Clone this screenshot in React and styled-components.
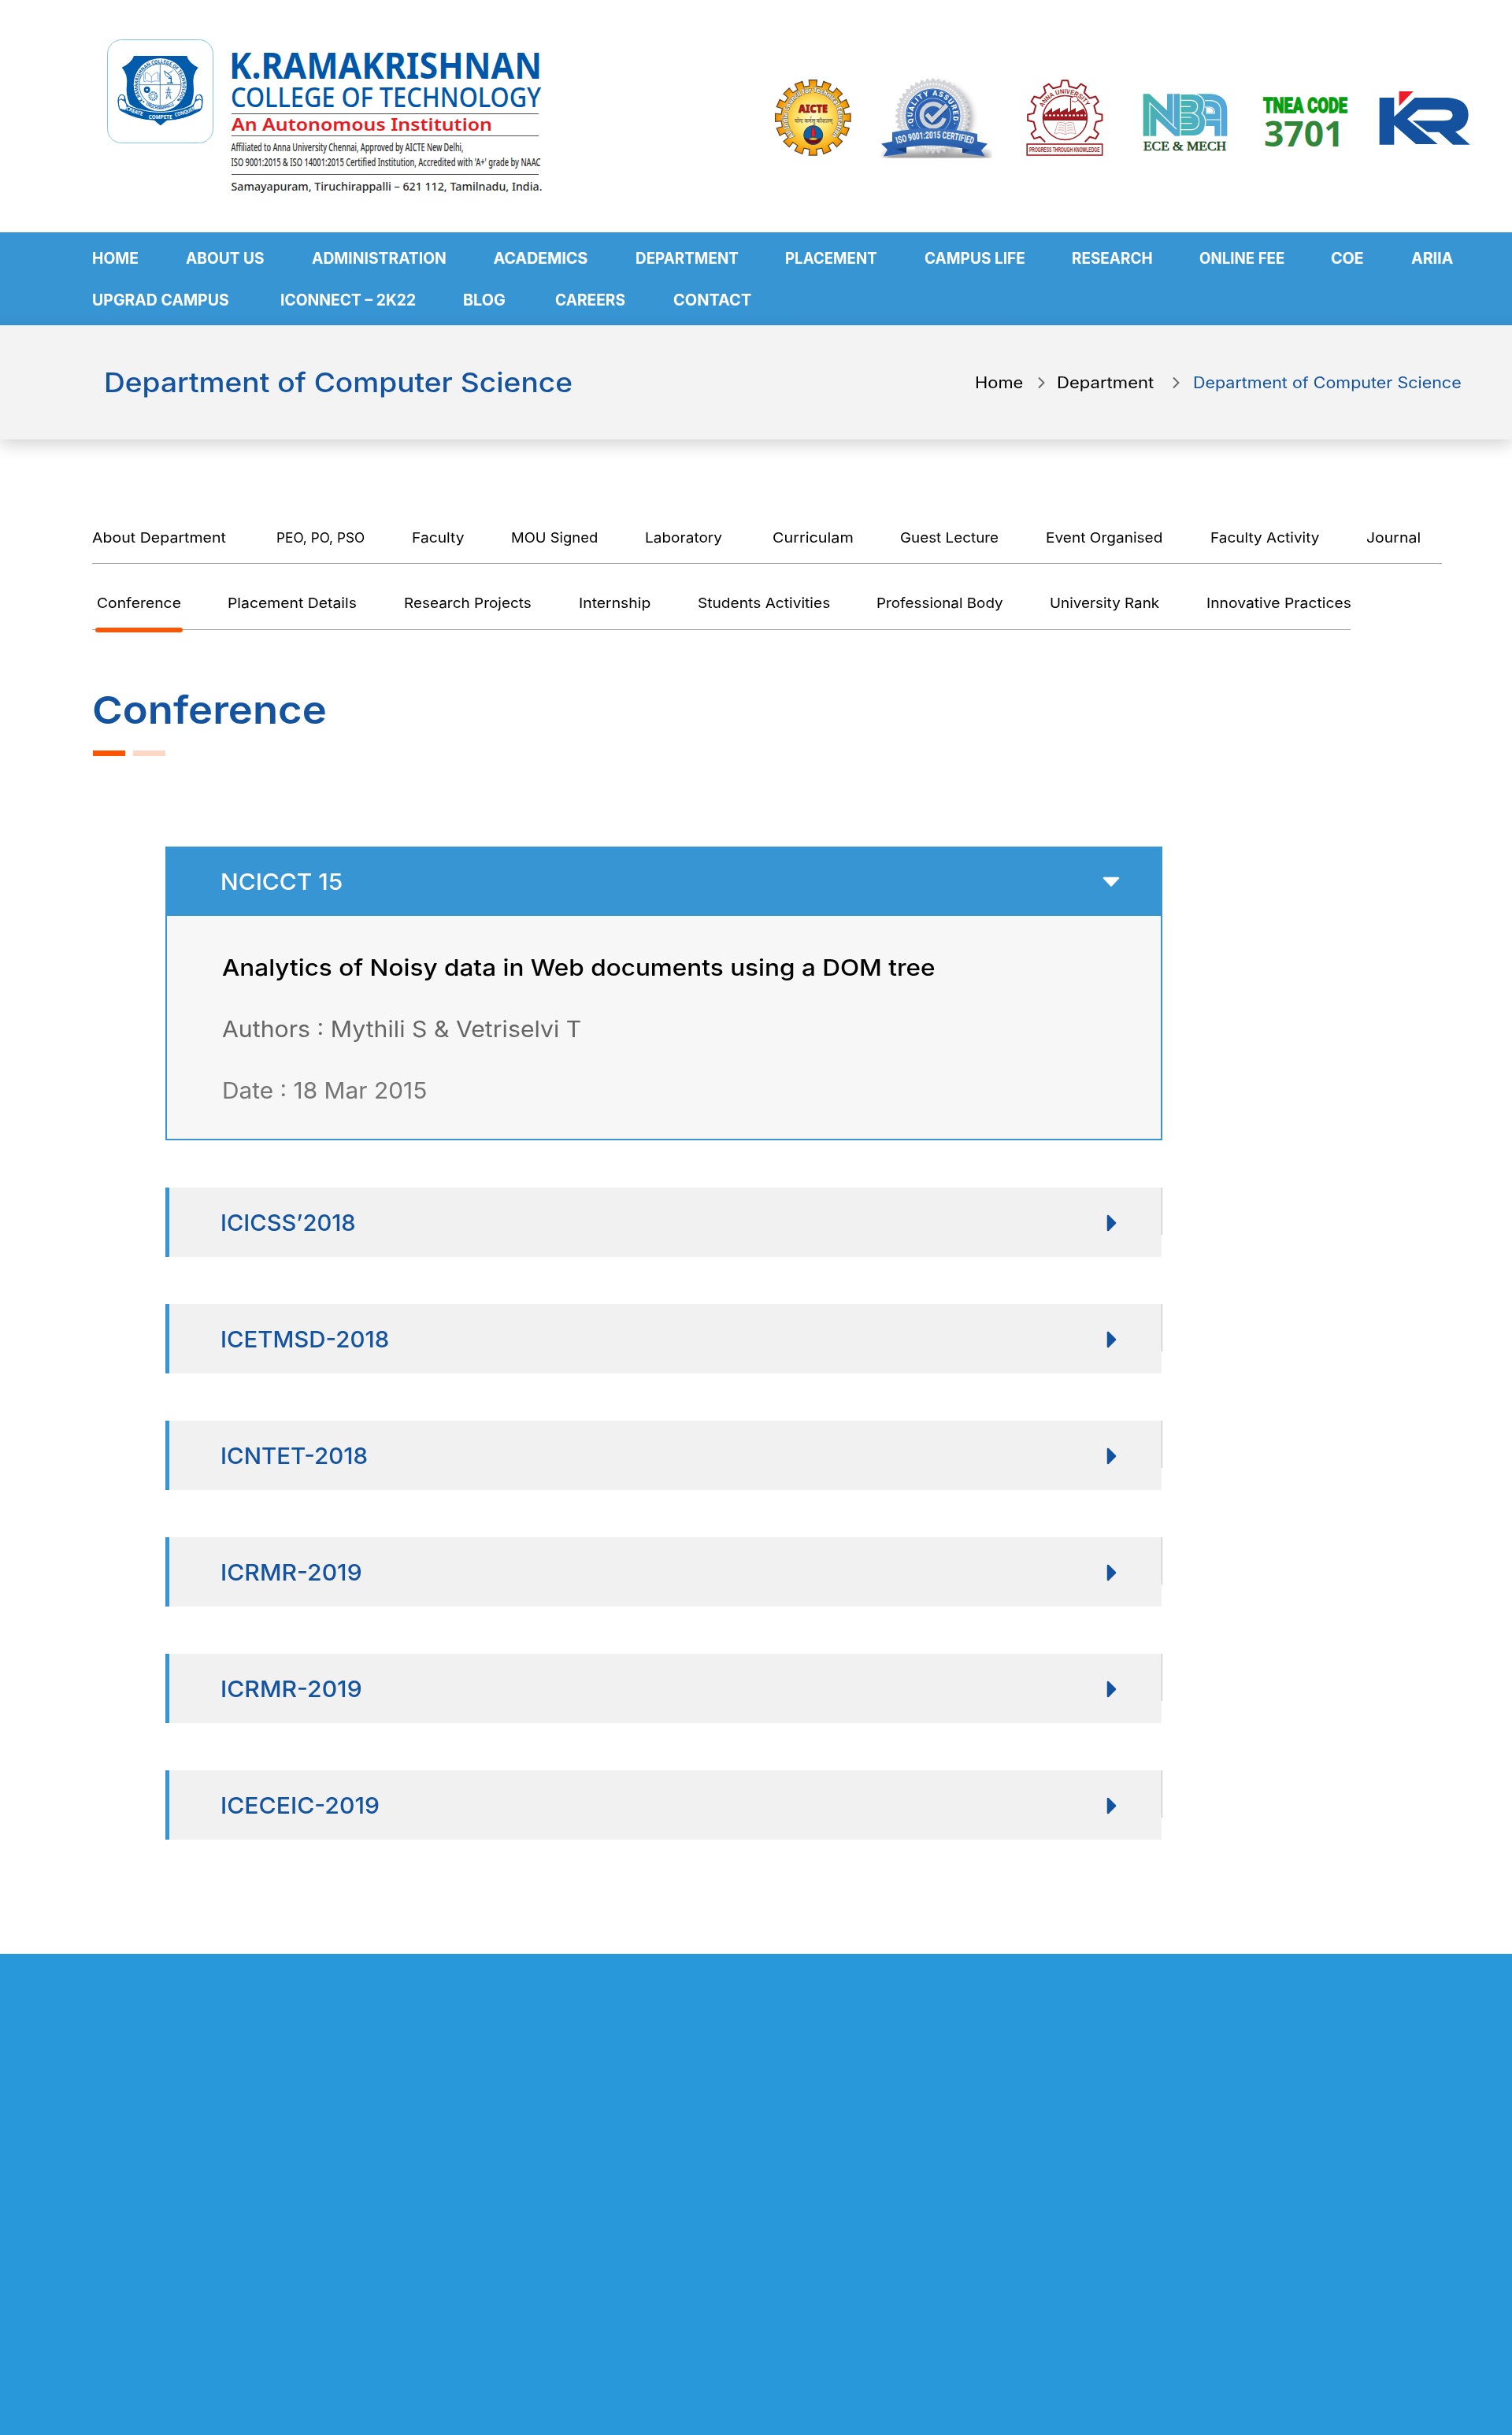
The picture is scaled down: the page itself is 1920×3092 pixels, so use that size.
import React, { useLayoutEffect, useRef, useState } from "react";
import styled, { createGlobalStyle, css } from "styled-components";

const BLUE = "#3895d3";
const NAVY = "#1353a0";
const ORANGE = "#ff5500";

const GlobalStyle = createGlobalStyle`
  *, *::before, *::after { box-sizing: border-box; }
  body { margin: 0; background: #fff; font-family: Inter, "Open Sans", sans-serif; }
`;

/* ---------- text that is widened to a set measure ---------- */

const Measure = styled.span`
  display: block;
  flex: none;
  white-space: nowrap;
  width: ${(p) => p.$width}px;
`;

const Glyphs = styled.span`
  display: inline-block;
  transform-origin: left center;
`;

function FitText({ width, children }) {
  const ref = useRef(null);
  const [scale, setScale] = useState(1);
  useLayoutEffect(() => {
    setScale((width + 1) / ref.current.offsetWidth);
  }, [width, children]);
  return (
    <Measure $width={width}>
      <Glyphs ref={ref} style={{ transform: `scaleX(${scale})` }}>{children}</Glyphs>
    </Measure>
  );
}

/* ---------- header ---------- */

const Header = styled.header`
  display: flex;
  align-items: flex-start;
  justify-content: space-between;
  height: 295px;
  padding: 40px 40px 0 130px;
`;

const Badges = styled.div`
  display: flex;
  padding-top: 50px;
`;

const Art = styled.svg`
  display: block;
  flex: none;
  overflow: visible;
`;

const sans = '"Noto Sans", "Open Sans", sans-serif';

function Fit({ x, y, w, size, children, ...rest }) {
  return (
    <text x={x} y={y} fontSize={size} textLength={w} lengthAdjust="spacingAndGlyphs" {...rest}>
      {children}
    </text>
  );
}

function CollegeLogo() {
  return (
    <Art width="570" height="220" viewBox="130 40 570 220" fontFamily={sans}>
      <defs>
        <path id="crestTop" d="M155.500 246.500 A85 85 0 1 1 284.500 246.500" />
        <path id="crestBottom" d="M163 263 A96 96 0 0 0 277 263" />
        <path id="mottoLeft" d="M89 282 Q120 299 165 309" />
        <path id="mottoMid" d="M176 319 H270" />
        <path id="mottoRight" d="M277 309 Q320 301 358 281" />
      </defs>
      <rect x="136.500" y="50.500" width="134" height="131" rx="18" fill="#fff" stroke="#84c5e3" />
      <g transform="translate(130 45) scale(0.33333)">
        <path d="M120 78 H322 Q328 104 365 122 Q342 148 347 190 Q352 225 338 262 L222 340 L104 262 Q88 225 93 190 Q98 148 74 122 Q112 104 120 78Z" fill="#005baa" />
        <path d="M57 250 C57 225 76 214 87 232 C94 250 88 262 105 269 Q222 316 335 269 C354 260 348 250 356 232 C368 214 387 225 384 250 C384 275 378 286 370 290 Q310 324 246 325 Q232 336 222 345 Q210 336 198 325 Q130 323 72 290 C62 285 58 270 57 250Z" fill="#005baa" stroke="#fff" strokeWidth="3" />
        <path d="M61 248 C61 226 78 220 84 234 C88 248 74 250 72 242 M72 242 Q92 250 94 274 L88 286 L66 280 Q60 264 61 248Z M380 248 C380 226 363 220 357 234 C353 248 367 250 369 242 M369 242 Q349 250 346 272 L354 284 L375 280 Q381 264 380 248Z" fill="#fff" stroke="#005baa" strokeWidth="3" />
        <circle cx="220" cy="188" r="101" fill="#fff" />
        <circle cx="220" cy="188" r="80" fill="#fff" stroke="#005baa" strokeWidth="2.500" />
        <path d="M220 108 V268 M140 188 H300" stroke="#005baa" strokeWidth="2.200" />
        <g fontSize="19" fontWeight="700" fill="#005baa">
          <text>
            <textPath href="#crestTop" textLength="384" lengthAdjust="spacingAndGlyphs">K.RAMAKRISHNAN COLLEGE OF TECHNOLOGY</textPath>
          </text>
          <text fontSize="16">
            <textPath href="#crestBottom" textLength="118" lengthAdjust="spacingAndGlyphs">TIRUCHIRAPPALLI</textPath>
          </text>
        </g>
        <circle cx="157" cy="253" r="3.500" fill="#005baa" />
        <circle cx="289" cy="246" r="3.500" fill="#005baa" />
        <path d="M158 145 V176 Q176 170 187 179 Q198 170 217 175 V143 M187 178 V156 Q170 138 163 142 V168 M187 156 Q205 138 212 141 V168" fill="none" stroke="#6f9fcd" strokeWidth="2.600" />
        <path d="M237 136 Q240 166 264 158Z M250 146 L268 134 M234 134 L258 152" fill="none" stroke="#005baa" strokeWidth="2.400" />
        <path d="M252 164 L262 162 V180 M246 181 H270" fill="none" stroke="#005baa" strokeWidth="4" />
        <path d="M252 196 L243 243 M252 196 L261 243 M243 207 H261 M240 217 H264 M248 222 L260 240 M256 222 L244 240" fill="none" stroke="#2a6fb3" strokeWidth="2.200" />
        <circle cx="170" cy="207" r="8" fill="none" stroke="#005baa" strokeWidth="8" />
        <circle cx="193" cy="231" r="15" fill="none" stroke="#3478b8" strokeWidth="6" strokeDasharray="5 2.800" />
        <circle cx="193" cy="231" r="8" fill="none" stroke="#3478b8" strokeWidth="2.500" />
        <g fontSize="20" fontWeight="700" fill="#fff">
          <text><textPath href="#mottoLeft" textLength="68" lengthAdjust="spacingAndGlyphs">CREATE</textPath></text>
          <text><textPath href="#mottoMid" textLength="90" lengthAdjust="spacingAndGlyphs">COMPETE</textPath></text>
          <text><textPath href="#mottoRight" textLength="82" lengthAdjust="spacingAndGlyphs">CONQUER</textPath></text>
        </g>
      </g>

      <Fit x={291} y={99.6} w={397} size={47.4} fontWeight="700" fill="#0057a8">K.RAMAKRISHNAN</Fit>
      <Fit x={293} y={135.6} w={394} size={33.8} fontWeight="500" fill="#0057a8">COLLEGE OF TECHNOLOGY</Fit>
      <path d="M294 144.500 H684 M294 172.500 H684 M294 221.500 H684" stroke="#4d4d4d" strokeWidth="1" />
      <Fit x={294} y={166.4} w={331} size={21.4} fontWeight="600" fill="#e31b23">An Autonomous Institution</Fit>
      <g fill="#2b2b2b">
        <Fit x={293.5} y={191.6} w={295} size={13.8} fontWeight="500">Affiliated to Anna University Chennai, Approved by AICTE New Delhi,</Fit>
        <Fit x={293.5} y={211} w={393} size={13.8} fontWeight="500">ISO 9001:2015 &amp; ISO 14001:2015 Certified Institution, Accredited with 'A+' grade by NAAC</Fit>
        <Fit x={293.5} y={242.4} w={395} size={15} fontWeight="500">Samayapuram, Tiruchirappalli – 621 112, Tamilnadu, India.</Fit>
      </g>
    </Art>
  );
}

function gearPath(cx, cy, teeth, inner, outer, rootHalf, tipHalf) {
  const step = (Math.PI * 2) / teeth;
  const at = (r, a) => `${(cx + r * Math.sin(a)).toFixed(2)} ${(cy - r * Math.cos(a)).toFixed(2)}`;
  const points = [];
  for (let i = 0; i < teeth; i += 1) {
    const a = i * step;
    points.push(at(inner, a - rootHalf * step), at(outer, a - tipHalf * step), at(outer, a + tipHalf * step), at(inner, a + rootHalf * step));
  }
  return `M${points.join("L")}Z`;
}

function AicteBadge() {
  return (
    <Art width="120" height="120" viewBox="980 90 120 120" fontFamily={sans}>
      <defs>
        <radialGradient id="gold">
          <stop offset="0" stopColor="#fffbd0" />
          <stop offset="0.45" stopColor="#ffe36a" />
          <stop offset="0.8" stopColor="#fbb41c" />
          <stop offset="1" stopColor="#ee8a00" />
        </radialGradient>
        <path id="aicteRing" d="M1009 172.500 A32.500 32.500 0 1 1 1055.600 172.500" />
      </defs>
      <path d={gearPath(1032.3, 149.3, 16, 40.5, 48, 0.27, 0.27)} fill="url(#gold)" stroke="#57442e" strokeWidth="1.200" />
      <text fontSize="8.800" fontWeight="700" fill="#fff" stroke="#6b6659" strokeWidth="1.300" paintOrder="stroke">
        <textPath href="#aicteRing" textLength="151" lengthAdjust="spacingAndGlyphs">All India Council for Technical Education</textPath>
      </text>
      <Fit x={1014} y={142.5} w={37} size={14.2} fontWeight="900" fill="#c8141b" stroke="#4a1210" strokeWidth="0.600">AICTE</Fit>
      <Fit x={1009} y={155.5} w={48} size={8} fontWeight="700" fill="#7d7355">योगः कर्मसु कौशलम्</Fit>
      <circle cx="1032.700" cy="171.600" r="12" fill="#0d63a8" stroke="#2a2f45" strokeWidth="0.900" />
      <path d="M1022 175 Q1032.700 179 1043.400 175 Q1041 182.500 1032.700 182.800 Q1024.500 182.500 1022 175Z" fill="#6c0f1f" />
      <path d="M1027 176.500 Q1032.700 173 1038.500 176.500 Q1032.700 179.500 1027 176.500Z" fill="#e8b723" />
      <path d="M1032.700 160.500 Q1036.500 168 1035 173 Q1032.700 175 1030.500 173 Q1029 168 1032.700 160.500Z" fill="#ee1c25" stroke="#7c0e14" strokeWidth="0.500" />
    </Art>
  );
}

function IsoBadge() {
  return (
    <Art width="180" height="120" viewBox="1100 90 180 120" fontFamily='Roboto, "Noto Sans", sans-serif'>
      <defs>
        <path id="sealRing" d="M1161.800 159.500 A26 26 0 1 1 1207.600 159.500" />
        <path id="sealRibbon" d="M1139 182.800 Q1187 168 1237 183.500" />
        <linearGradient id="ribbonFill" x1="0" x2="0" y1="0" y2="1">
          <stop offset="0" stopColor="#3d74bd" />
          <stop offset="1" stopColor="#2558a5" />
        </linearGradient>
        <filter id="soft" x="-30%" y="-30%" width="160%" height="160%">
          <feGaussianBlur stdDeviation="4" />
        </filter>
        <clipPath id="sealClip"><rect x="1110" y="96" width="150" height="104.500" /></clipPath>
      </defs>
      <g clipPath="url(#sealClip)">
        <circle cx="1191" cy="150" r="43" fill="#000" opacity="0.4" filter="url(#soft)" />
        <path d="M1124 193 H1256 V206 H1124Z" fill="#000" opacity="0.42" filter="url(#soft)" />
      </g>
      <path d={gearPath(1184.7, 147.2, 40, 44, 48, 0.5, 0.08)} fill="#d2d4d7" />
      <circle cx="1184.700" cy="147.200" r="40.500" fill="none" stroke="#f5f6f7" strokeWidth="2.500" strokeDasharray="2 1.800" />
      <circle cx="1184.700" cy="147.200" r="35.500" fill="#2c62b2" stroke="#e9ebee" strokeWidth="1.500" />
      <circle cx="1184.700" cy="147.200" r="33.500" fill="none" stroke="#6f98d2" strokeWidth="0.800" />
      <circle cx="1184.700" cy="147.200" r="22.500" fill="#2c62b2" stroke="#9fbbe2" strokeWidth="1" />
      <path d="M1195.500 136.500 A14.500 14.500 0 1 0 1199 150" fill="none" stroke="#cfd2d6" strokeWidth="5.500" />
      <path d="M1176.500 145.500 L1183.500 153.500 L1203 133.500" fill="none" stroke="#214d93" strokeWidth="7.500" />
      <path d="M1176.500 145 L1183.500 152.500 L1202.500 133.500" fill="none" stroke="#cfd2d6" strokeWidth="5.500" />
      <text fontSize="9" fontWeight="800" fill="#fff">
        <textPath href="#sealRing" textLength="104" lengthAdjust="spacing">·QUALITY  ASSURED·</textPath>
      </text>
      <path d="M1119 182.500 L1136 179 L1151 190 V194.500 L1122 198.500 L1127 190Z M1254 182.500 L1238 179 L1222 190 V194 L1250.500 198.500 L1246 191Z" fill="#2a5eae" />
      <path d="M1151 187 V194 L1133 188Z M1222 187 V194 L1241 188Z" fill="#173e7d" />
      <path d="M1133 168 Q1187 157 1241 170 V193 Q1187 177.500 1133 190.500Z" fill="url(#ribbonFill)" />
      <text fontSize="12.400" fontWeight="800" fill="#f4f5f7">
        <textPath href="#sealRibbon" textLength="98" lengthAdjust="spacingAndGlyphs">ISO 9001:2015 CERTIFIED</textPath>
      </text>
    </Art>
  );
}

function AnnaBadge() {
  const red = "#9d1b20";
  return (
    <Art width="150" height="120" viewBox="1280 90 150 120" fontFamily='"Liberation Sans", sans-serif'>
      <defs>
        <path id="annaArc" d="M1324.300 136.500 A31 31 0 0 1 1380.300 136.500" />
      </defs>
      <path d={gearPath(1352.3, 149.3, 12, 40, 47.3, 0.26, 0.15)} fill="#fff" stroke={red} strokeWidth="2" strokeLinejoin="round" />
      <path d="M1325 183 L1334 172 H1371 L1380 183 V200 H1325Z" fill="#fff" />
      <circle cx="1352.500" cy="149.500" r="28" fill="#fff" stroke={red} strokeWidth="1.500" />
      <text fontSize="8.300" fontWeight="700" fill={red} stroke="#fff" strokeWidth="1.500" paintOrder="stroke">
        <textPath href="#annaArc" textLength="68" lengthAdjust="spacingAndGlyphs">ANNA UNIVERSITY</textPath>
      </text>
      <path d="M1325 153 V146 L1336 137 V142.500 L1346 137 V142.500 L1356 137 V142.500 L1366 137 V142.500 L1376 138 L1380 146 V153Z" fill={red} />
      <path d="M1327 146.500 H1379" stroke="#fff" strokeWidth="2.200" strokeDasharray="3 2" />
      <path d="M1359.500 142 V124" stroke={red} strokeWidth="1.200" />
      <path d="M1360 124 Q1368 120 1369 127 Q1366 131 1361 128" fill="#fff" stroke={red} strokeWidth="0.900" />
      <g fill="none" stroke="#cf8f91" strokeWidth="0.800">
        <path d="M1343 156 Q1349 154 1353 157 Q1357 154 1363 156 L1366 170 Q1358 167 1353 171 Q1347 167 1339 170Z M1353 157 V171" />
        <path d="M1344.500 159 Q1349 158 1351.500 160 M1344 162 Q1348 161 1351.500 163 M1343 165 Q1348 164 1351.500 166 M1355 160 Q1358 158 1361.500 159 M1355 163 Q1358 161 1362.500 162 M1355 166 Q1358 164 1363 165" />
      </g>
      <rect x="1304.200" y="183" width="95.500" height="14" fill="#fff" stroke={red} strokeWidth="1.600" />
      <Fit x={1307} y={193.3} w={89.5} size={9.4} fontWeight="700" fill={red}>PROGRESS THROUGH KNOWLEDGE</Fit>
    </Art>
  );
}

function NbaBadge() {
  return (
    <Art width="155" height="120" viewBox="1430 90 155 120">
      <defs>
        <linearGradient id="nba" gradientUnits="userSpaceOnUse" x1="95" y1="0" x2="415" y2="0">
          <stop offset="0" stopColor="#45b5a6" />
          <stop offset="0.4" stopColor="#53a6d8" />
          <stop offset="0.44" stopColor="#45b5ae" />
          <stop offset="0.75" stopColor="#4fadd0" />
          <stop offset="1" stopColor="#56a5de" />
        </linearGradient>
      </defs>
      <g transform="translate(1420 80) scale(0.33333)">
        <path d="M300 118 H352 Q415 122 415 180 V278 H367 V240 H330Z" fill="url(#nba)" />
        <path d="M330 143 H352 Q390 146 390 182 V278 M330 168 H350 Q367 170 367 192 H335 M335 216 H390" fill="none" stroke="#fff" strokeWidth="3.500" />
        <path d="M335 170 H348 Q362 172 362 190 H335Z" fill="#fff" />
        <path d="M237 118 H285 Q330 122 327 162 Q326 182 318 192 Q334 204 332 232 Q330 274 290 278 H237Z" fill="url(#nba)" stroke="#fff" strokeWidth="4" />
        <path d="M237 142 H278 Q302 144 302 165 Q302 190 278 190 M237 166 H276 M237 190 H280 Q308 196 308 224 Q306 252 282 254 H237 M237 207 H278 M237 230 H282" fill="none" stroke="#fff" strokeWidth="3.500" />
        <path d="M95 118 H119 L186 181 V118 H235 V278 H216 L145 212 V278 H95Z" fill="url(#nba)" />
        <path d="M120 280 V152 L222 252 M210 118 V240" fill="none" stroke="#fff" strokeWidth="3.500" />
      </g>
      <Fit x={1452} y={190.7} w={105} size={16} fontFamily='"Liberation Serif", serif' fill="#17481a" stroke="#17481a" strokeWidth="0.500">ECE &amp; MECH</Fit>
    </Art>
  );
}

function TneaBadge() {
  return (
    <Art width="150" height="120" viewBox="1585 90 150 120">
      <Fit x={1604} y={142.8} w={107} size={26.6} fontFamily="Roboto, sans-serif" fontWeight="900" fill="#089c10" stroke="#089c10" strokeWidth="1.300">TNEA CODE</Fit>
      <Fit x={1605} y={185.6} w={101.5} size={44} fontFamily='"Open Sans", sans-serif' fontWeight="700" fill="#32863a">3701</Fit>
    </Art>
  );
}

function KrBadge() {
  return (
    <Art width="145" height="120" viewBox="1735 90 145 120">
      <g transform="translate(1420 80) scale(0.33333)">
        <path d="M995 132 H1051 V205 L1130 132 H1255 Q1334 136 1334 198 Q1332 248 1284 262 L1340 311 H1275 L1222 263 H1178 L1121 220 H1240 Q1273 220 1274 199 Q1273 178 1242 178 H1143 L1101 214 L1217 309 H1134 L1051 236 V311 H995Z" fill="#14529f" />
        <path d="M1070 108 H1124 L1070 164Z" fill="#ee1c2b" />
      </g>
    </Art>
  );
}

/* ---------- main navigation ---------- */

const Nav = styled.nav`
  height: 118px;
  padding: 6px 0 0 117px;
  background: linear-gradient(${BLUE} 88%, #348ecb);
`;

const NavRow = styled.div`
  display: flex;
  align-items: center;
  height: 53px;
`;

const NavLink = styled.a`
  margin-left: ${(p) => p.$gap}px;
  color: #fff;
  font-size: 19.6px;
  font-weight: 700;
  line-height: 30px;
`;

// [label, space before, measure]
const NAV_ROWS = [
  [
    ["HOME", 0, 58], ["ABOUT US", 61, 98.5], ["ADMINISTRATION", 61, 169.5], ["ACADEMICS", 61.5, 119],
    ["DEPARTMENT", 61, 130], ["PLACEMENT", 60.5, 115.5], ["CAMPUS LIFE", 61, 126.5], ["RESEARCH", 61, 101.5],
    ["ONLINE FEE", 60.5, 107], ["COE", 60, 41], ["ARIIA", 61, 52],
  ],
  [["UPGRAD CAMPUS", 0, 173], ["ICONNECT – 2K22", 65.5, 171.5], ["BLOG", 60.5, 52.5], ["CAREERS", 65, 88], ["CONTACT", 61.5, 98]],
];

/* ---------- page banner ---------- */

const Banner = styled.section`
  display: flex;
  align-items: center;
  justify-content: space-between;
  height: 145px;
  padding: 0 65px 0 132px;
  background: #f3f3f3;
  box-shadow: 0 6px 20px rgba(0, 0, 0, 0.18);
  clip-path: inset(0 0 -40px 0);
`;

const BannerTitle = styled.h1`
  margin: 0;
  color: ${NAVY};
  font-size: 34px;
  font-weight: 500;
  line-height: 44px;
`;

const Crumbs = styled.div`
  display: flex;
  align-items: center;
  padding-top: 1px;
  font-size: 19.4px;
  font-weight: 420;
  line-height: 30px;
`;

const Crumb = styled.span`
  color: ${(p) => (p.$current ? NAVY : "#000")};
`;

const CrumbArrow = styled.svg`
  margin: 0 ${(p) => p.$after}px 0 ${(p) => p.$before}px;
`;

function Arrow({ before, after }) {
  return (
    <CrumbArrow $before={before} $after={after} width="9" height="16" viewBox="0 0 9 16">
      <path d="M1 1.500 L7.500 8 L1 14.500" fill="none" stroke="#666" strokeWidth="1.800" />
    </CrumbArrow>
  );
}

/* ---------- department tabs ---------- */

const Main = styled.main`
  padding: 92px 0 145px 117px;
`;

const TabRow = styled.div`
  display: flex;
  align-items: center;
  width: ${(p) => p.$width}px;
  height: ${(p) => p.$height}px;
  margin-bottom: 16px;
  padding-left: ${(p) => p.$indent}px;
  border-bottom: 1px solid #a6a6a6;
`;

const Tab = styled.a`
  position: relative;
  margin-left: ${(p) => p.$gap}px;
  color: #000;
  font-size: 17.8px;
  font-weight: 420;
  line-height: 28px;
  ${(p) =>
    p.$active &&
    css`
      &::after {
        content: "";
        position: absolute;
        left: -2px;
        right: -3px;
        bottom: -23px;
        height: 5.5px;
        border-radius: 3px;
        background: ${ORANGE};
      }
    `}
`;

const TABS_TOP = [
  ["About Department", 0, 168.5], ["PEO, PO, PSO", 65.5, 111.5], ["Faculty", 60.5, 65], ["MOU Signed", 60.5, 109],
  ["Laboratory", 61, 97.5], ["Curriculam", 65, 101.5], ["Guest Lecture", 60.5, 124], ["Event Organised", 60.5, 147],
  ["Faculty Activity", 62.5, 137], ["Journal", 60.5, 68],
];

const TABS_BOTTOM = [
  ["Conference", 0, 105.5], ["Placement Details", 60, 163.5], ["Research Projects", 60.5, 161], ["Internship", 61, 90.5],
  ["Students Activities", 60.5, 167], ["Professional Body", 60, 160], ["University Rank", 60.5, 138], ["Innovative Practices", 60.5, 182.5],
];

/* ---------- section heading ---------- */

const Heading = styled.h2`
  margin: 72px 0 0;
  color: ${NAVY};
  font-size: 48.5px;
  font-weight: 600;
  line-height: 60px;
`;

const Dashes = styled.div`
  display: flex;
  gap: 10px;
  margin: 21px 0 115.5px 1px;
`;

const Dash = styled.i`
  width: 41px;
  height: 6.5px;
  background: ${(p) => (p.$pale ? "#ffd5c4" : ORANGE)};
`;

/* ---------- accordion ---------- */

const Accordion = styled.div`
  display: flex;
  flex-direction: column;
  gap: 60px;
  width: 1266px;
  margin-left: 93px;
`;

const Bar = styled.div`
  display: flex;
  align-items: center;
  justify-content: space-between;
  height: 88px;
  padding-top: 1px;
  font-size: 29px;
  font-weight: 500;
  line-height: 40px;
`;

const OpenBar = styled(Bar)`
  padding-left: 70px;
  padding-right: 54px;
  background: ${BLUE};
  color: #fff;
`;

const ClosedBar = styled(Bar)`
  padding-left: 65px;
  padding-right: 58px;
  border-left: 5px solid ${BLUE};
  background:
    linear-gradient(#c2c2c2, #c2c2c2) right top / 1px 60px no-repeat,
    linear-gradient(#f1f1f1, #f1f1f1) left top / calc(100% - 1px) 100% no-repeat;
  color: ${NAVY};
`;

const Panel = styled.div`
  height: 285px;
  padding: 27px 0 0 70px;
  border: 2px solid ${BLUE};
  border-top: 0;
  background: #f7f7f7;
`;

const PanelLine = styled.p`
  margin: 0;
  color: ${(p) => p.$color};
  font-size: 28.6px;
  font-weight: ${(p) => p.$weight};
  line-height: 78px;
`;

const CLOSED = [
  ["ICICSS’2018", 171], ["ICETMSD-2018", 213], ["ICNTET-2018", 186], ["ICRMR-2019", 179], ["ICRMR-2019", 179], ["ICECEIC-2019", 201],
];

const Footer = styled.footer`
  height: 611px;
  background: #2998da;
`;

export default function App() {
  return (
    <>
      <GlobalStyle />
      <Header>
        <CollegeLogo />
        <Badges>
          <AicteBadge />
          <IsoBadge />
          <AnnaBadge />
          <NbaBadge />
          <TneaBadge />
          <KrBadge />
        </Badges>
      </Header>

      <Nav>
        {NAV_ROWS.map((row, i) => (
          <NavRow key={i}>
            {row.map(([label, gap, width]) => (
              <NavLink key={label} $gap={gap}><FitText width={width}>{label}</FitText></NavLink>
            ))}
          </NavRow>
        ))}
      </Nav>

      <Banner>
        <BannerTitle><FitText width={594}>Department of Computer Science</FitText></BannerTitle>
        <Crumbs>
          <Crumb><FitText width={60}>Home</FitText></Crumb>
          <Arrow before={20} after={15} />
          <Crumb><FitText width={122}>Department</FitText></Crumb>
          <Arrow before={25} after={17} />
          <Crumb $current><FitText width={340}>Department of Computer Science</FitText></Crumb>
        </Crumbs>
      </Banner>

      <Main>
        <TabRow $width={1714} $height={66} $indent={0}>
          {TABS_TOP.map(([label, gap, width]) => (
            <Tab key={label} $gap={gap}><FitText width={width}>{label}</FitText></Tab>
          ))}
        </TabRow>
        <TabRow $width={1598} $height={68} $indent={6}>
          {TABS_BOTTOM.map(([label, gap, width]) => (
            <Tab key={label} $gap={gap} $active={label === "Conference"}><FitText width={width}>{label}</FitText></Tab>
          ))}
        </TabRow>

        <Heading><FitText width={297}>Conference</FitText></Heading>
        <Dashes>
          <Dash />
          <Dash $pale />
        </Dashes>

        <Accordion>
          <div>
            <OpenBar>
              <FitText width={154}>NCICCT 15</FitText>
              <svg width="22" height="14" viewBox="0 0 22 14">
                <path d="M2 2 H20 L11 11.500Z" fill="#fff" stroke="#fff" strokeWidth="2.500" strokeLinejoin="round" />
              </svg>
            </OpenBar>
            <Panel>
              <PanelLine $color="#000" $weight={450}>
                <FitText width={905}>Analytics of Noisy data in Web documents using a DOM tree</FitText>
              </PanelLine>
              <PanelLine $color="#666" $weight={400}>
                <FitText width={455}>Authors : Mythili S &amp; Vetriselvi T</FitText>
              </PanelLine>
              <PanelLine $color="#757575" $weight={400}>
                <FitText width={259}>Date : 18 Mar 2015</FitText>
              </PanelLine>
            </Panel>
          </div>
          {CLOSED.map(([label, width], i) => (
            <ClosedBar key={i}>
              <FitText width={width}>{label}</FitText>
              <svg width="13" height="22" viewBox="0 0 13 22">
                <path d="M2 2 V20 L11 11Z" fill={NAVY} stroke={NAVY} strokeWidth="2.500" strokeLinejoin="round" />
              </svg>
            </ClosedBar>
          ))}
        </Accordion>
      </Main>
      <Footer />
    </>
  );
}
